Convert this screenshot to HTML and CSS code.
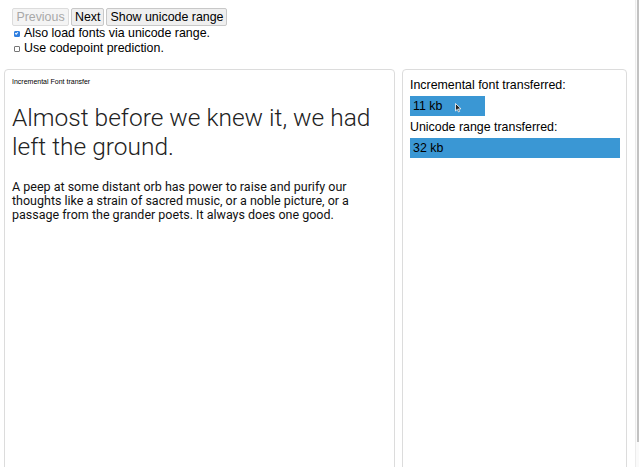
FILE: index.html
```html
<!DOCTYPE html>
<html>
<head>
<meta charset="utf-8">
<link rel="stylesheet" href="styles.css">
</head>
<body>
<div class="page">
  <div class="main">
    <div class="controls">
      <div class="buttons">
        <button class="btn prev" disabled>Previous</button>
        <button class="btn">Next</button>
        <button class="btn">Show unicode range</button>
      </div>
      <label class="opt"><input type="checkbox" checked> Also load fonts via unicode range.</label>
      <label class="opt"><input type="checkbox"> Use codepoint prediction.</label>
    </div>
    <div class="panels">
      <div class="panel left">
        <div class="caption">Incremental Font transfer</div>
        <h1 class="heading">Almost before we knew it, we had left the ground.</h1>
        <p class="body">A peep at some distant orb has power to raise and purify our thoughts like a strain of sacred music, or a noble picture, or a passage from the grander poets. It always does one good.</p>
      </div>
      <div class="panel right">
        <div class="label">Incremental font transferred:</div>
        <div class="bar" style="width:75px">11 kb <svg class="cursor" width="7" height="10" viewBox="0 0 7 10"><path d="M0.5 0.5 L0.5 8 L2.3 6.3 L3.5 9 L4.6 8.5 L3.4 5.9 L6 5.8 Z" fill="#222" stroke="#fff" stroke-width="0.8"/></svg></div>
        <div class="label">Unicode range transferred:</div>
        <div class="bar" style="width:210px">32 kb</div>
      </div>
    </div>
  </div>
  <div class="scrollbar"><div class="thumb"></div></div>
</div>
</body>
</html>
```
FILE: styles.css
```css
html, body {
  margin: 0;
  padding: 0;
  height: 467px;
  overflow: hidden;
  background: #fff;
}
.page {
  display: flex;
  height: 467px;
}
.main {
  flex: 1;
  padding: 0 0 0 4px;
  font-family: "Liberation Sans", Arial, sans-serif;
  font-size: 12.4px;
  color: #000;
}
.controls {
  padding: 8px 0 0 8px;
}
.buttons {
  display: flex;
  gap: 1px;
}
.btn {
  font-family: "Liberation Sans", Arial, sans-serif;
  font-size: 12.4px;
  height: 18px;
  padding: 0 3px;
  margin: 0;
  background: #efefef;
  border: 1px solid #c8c8c8;
  border-radius: 2px;
  color: #000;
  line-height: 16px;
}
.btn + .btn {
  margin-left: 1px;
}
.prev {
  width: 57px;
}
.btn:disabled {
  color: #a8a8a8;
  border-color: #dcdcdc;
  background: #f4f4f4;
}
.opt {
  display: flex;
  align-items: center;
  height: 15px;
  line-height: 15px;
}
.opt input {
  -webkit-appearance: none;
  appearance: none;
  width: 6px;
  height: 6px;
  margin: 1px 4px 0 2px;
  border: 1px solid #767676;
  border-radius: 1px;
  background: #fff;
  box-sizing: border-box;
}
.opt input:checked {
  background: #2f7fe0;
  border-color: #2f7fe0;
}
.opt input:checked::after {
  content: "";
  display: block;
  width: 2px;
  height: 1px;
  border-left: 1px solid #fff;
  border-bottom: 1px solid #fff;
  transform: rotate(-45deg);
}
.panels {
  display: flex;
  gap: 7px;
  margin-top: 13px;
  margin-right: 8px;
}
.panel {
  border: 1px solid #dcdcdc;
  border-radius: 4px;
  height: 420px;
  padding: 7px;
  box-sizing: border-box;
}
.left {
  width: 391px;
}
.right {
  width: 225px;
}
.caption {
  font-family: "Liberation Sans", Arial, sans-serif;
  font-size: 7px;
  line-height: 10px;
}
.heading {
  font-family: Roboto, sans-serif;
  font-weight: 300;
  font-size: 24.5px;
  line-height: 29px;
  margin: 16px 0 0 0;
  color: #222;
}
.body {
  font-family: Roboto, sans-serif;
  font-size: 12.5px;
  line-height: 14px;
  margin: 19px 0 0 0;
  color: #111;
}
.label {
  line-height: 16px;
  margin: 0 0 3px 0;
}
.bar {
  background: #3a97d4;
  height: 20px;
  padding-left: 3px;
  box-sizing: border-box;
  margin-bottom: 3px;
  display: flex;
  align-items: center;
}
.cursor {
  margin-left: 13px;
  margin-top: 3px;
}
.scrollbar {
  width: 5px;
  border-left: 1px solid #ececec;
  background: #fafafa;
}
.thumb {
  margin-left: 1px;
  width: 3px;
  height: 442px;
  background: #c2c2c2;
}
```
